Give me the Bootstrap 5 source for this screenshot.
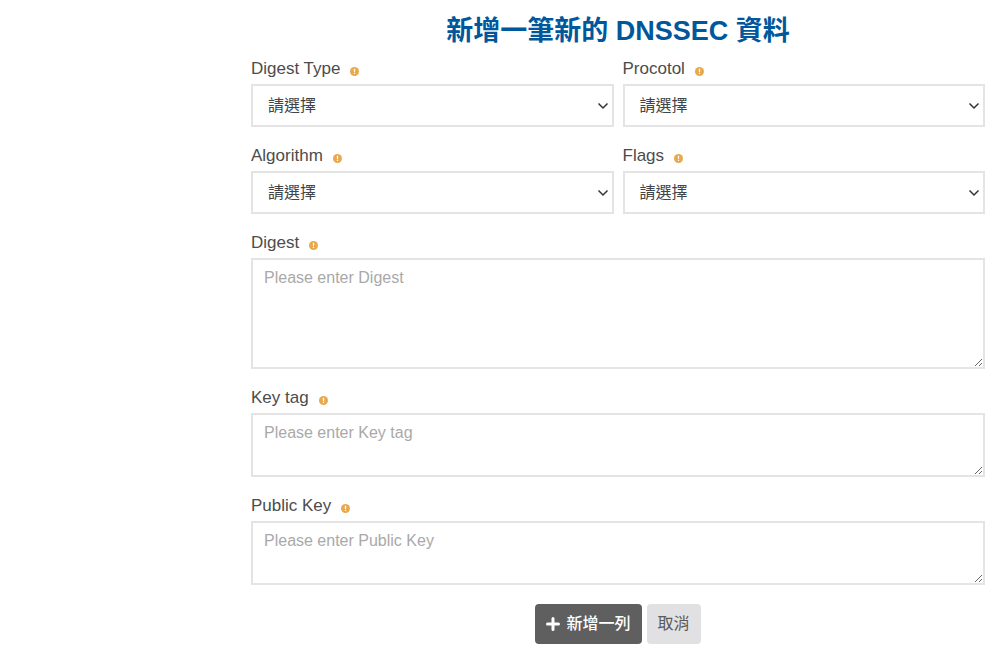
<!DOCTYPE html>
<html lang="zh-Hant">
<head>
<meta charset="utf-8">
<meta name="viewport" content="width=device-width, initial-scale=1">
<title>新增一筆新的 DNSSEC 資料</title>
<link href="https://cdn.jsdelivr.net/npm/bootstrap@5.3.0/dist/css/bootstrap.min.css" rel="stylesheet">
<style>
body { font-family: "Liberation Sans", "Noto Sans CJK TC", sans-serif; color: #4c4c4c; background: #fff; }
.dns-form { padding: 13px 15px 20px 1px; }
.dns-title { font-size: 27px; line-height: 36px; color: #00579b; margin: 0 0 10px; }
.dns-fields { row-gap: 19px; --bs-gutter-x: 9px; }
.form-label { display: flex; align-items: center; gap: 10px; font-size: 17px; line-height: 20px; margin: 0 0 5px; }
.hint-icon { width: 9px; height: 9px; margin-top: 4px; flex: none; }
.form-select, .form-control { border: 2px solid #e4e4e4; border-radius: 0; font-size: 16px; line-height: 24px; background-color: #fff; }
.form-select {
  height: 43px; color: #40454a; padding: 6px 32px 6px 15px;
  background-image: url("data:image/svg+xml,%3Csvg xmlns='http://www.w3.org/2000/svg' viewBox='0 0 12 12'%3E%3Cpath d='M1.5 3.5 6 8l4.500-4.500' fill='none' stroke='%23333' stroke-width='1.500'/%3E%3C/svg%3E");
  background-size: 12px 12px; background-position: right 3px center;
}
textarea.form-control { height: 64px; padding: 6px 11px; resize: vertical; }
textarea.form-control.tall-box { height: 111px; }
.form-control::placeholder { color: #a9a9a9; opacity: 1; }
.form-actions { gap: 5px; margin-top: 19px; }
.form-actions .btn { height: 40px; border: 0; border-radius: 4px; padding: 0 11px; font-size: 16px; }
.btn-add { background: #5f5f5f; color: #fff; font-weight: 500; gap: 6px; }
.btn-add:hover { background: #4c4c4c; color: #fff; }
.btn-cancel { background: #e1e1e3; color: #5a5a5a; }
</style>
</head>
<body>
<svg class="d-none" aria-hidden="true">
  <symbol id="hint" viewBox="0 0 10 10"><circle cx="5" cy="5" r="5" fill="#e8a94d"/><path d="M4.200 2h1.600l-.2 3.600H4.400zM4.300 6.400h1.400v1.400H4.300z" fill="#fff"/></symbol>
</svg>
<div class="container-fluid p-0">
  <div class="row g-0">
    <main class="col-9 offset-3">
      <form class="dns-form">
        <h1 class="dns-title text-center fw-bold">新增一筆新的 DNSSEC 資料</h1>
        <div class="row dns-fields">
          <div class="col-6">
            <label class="form-label" for="digestType">Digest Type <svg class="hint-icon"><use href="#hint"/></svg></label>
            <select class="form-select" id="digestType"><option>請選擇</option></select>
          </div>
          <div class="col-6">
            <label class="form-label" for="protocol">Procotol <svg class="hint-icon"><use href="#hint"/></svg></label>
            <select class="form-select" id="protocol"><option>請選擇</option></select>
          </div>
          <div class="col-6">
            <label class="form-label" for="algorithm">Algorithm <svg class="hint-icon"><use href="#hint"/></svg></label>
            <select class="form-select" id="algorithm"><option>請選擇</option></select>
          </div>
          <div class="col-6">
            <label class="form-label" for="flags">Flags <svg class="hint-icon"><use href="#hint"/></svg></label>
            <select class="form-select" id="flags"><option>請選擇</option></select>
          </div>
          <div class="col-12">
            <label class="form-label" for="digest">Digest <svg class="hint-icon"><use href="#hint"/></svg></label>
            <textarea class="form-control tall-box" id="digest" placeholder="Please enter Digest"></textarea>
          </div>
          <div class="col-12">
            <label class="form-label" for="keyTag">Key tag <svg class="hint-icon"><use href="#hint"/></svg></label>
            <textarea class="form-control" id="keyTag" placeholder="Please enter Key tag"></textarea>
          </div>
          <div class="col-12">
            <label class="form-label" for="publicKey">Public Key <svg class="hint-icon"><use href="#hint"/></svg></label>
            <textarea class="form-control" id="publicKey" placeholder="Please enter Public Key"></textarea>
          </div>
        </div>
        <div class="form-actions d-flex justify-content-center">
          <button type="button" class="btn btn-add d-inline-flex align-items-center">
            <svg width="14" height="14" viewBox="0 0 14 14" aria-hidden="true"><path d="M7 1.500v11M1.500 7h11" stroke="#fff" stroke-width="3" stroke-linecap="round"/></svg>
            新增一列
          </button>
          <button type="button" class="btn btn-cancel">取消</button>
        </div>
      </form>
    </main>
  </div>
</div>
<script src="https://cdn.jsdelivr.net/npm/bootstrap@5.3.0/dist/js/bootstrap.bundle.min.js"></script>
</body>
</html>
